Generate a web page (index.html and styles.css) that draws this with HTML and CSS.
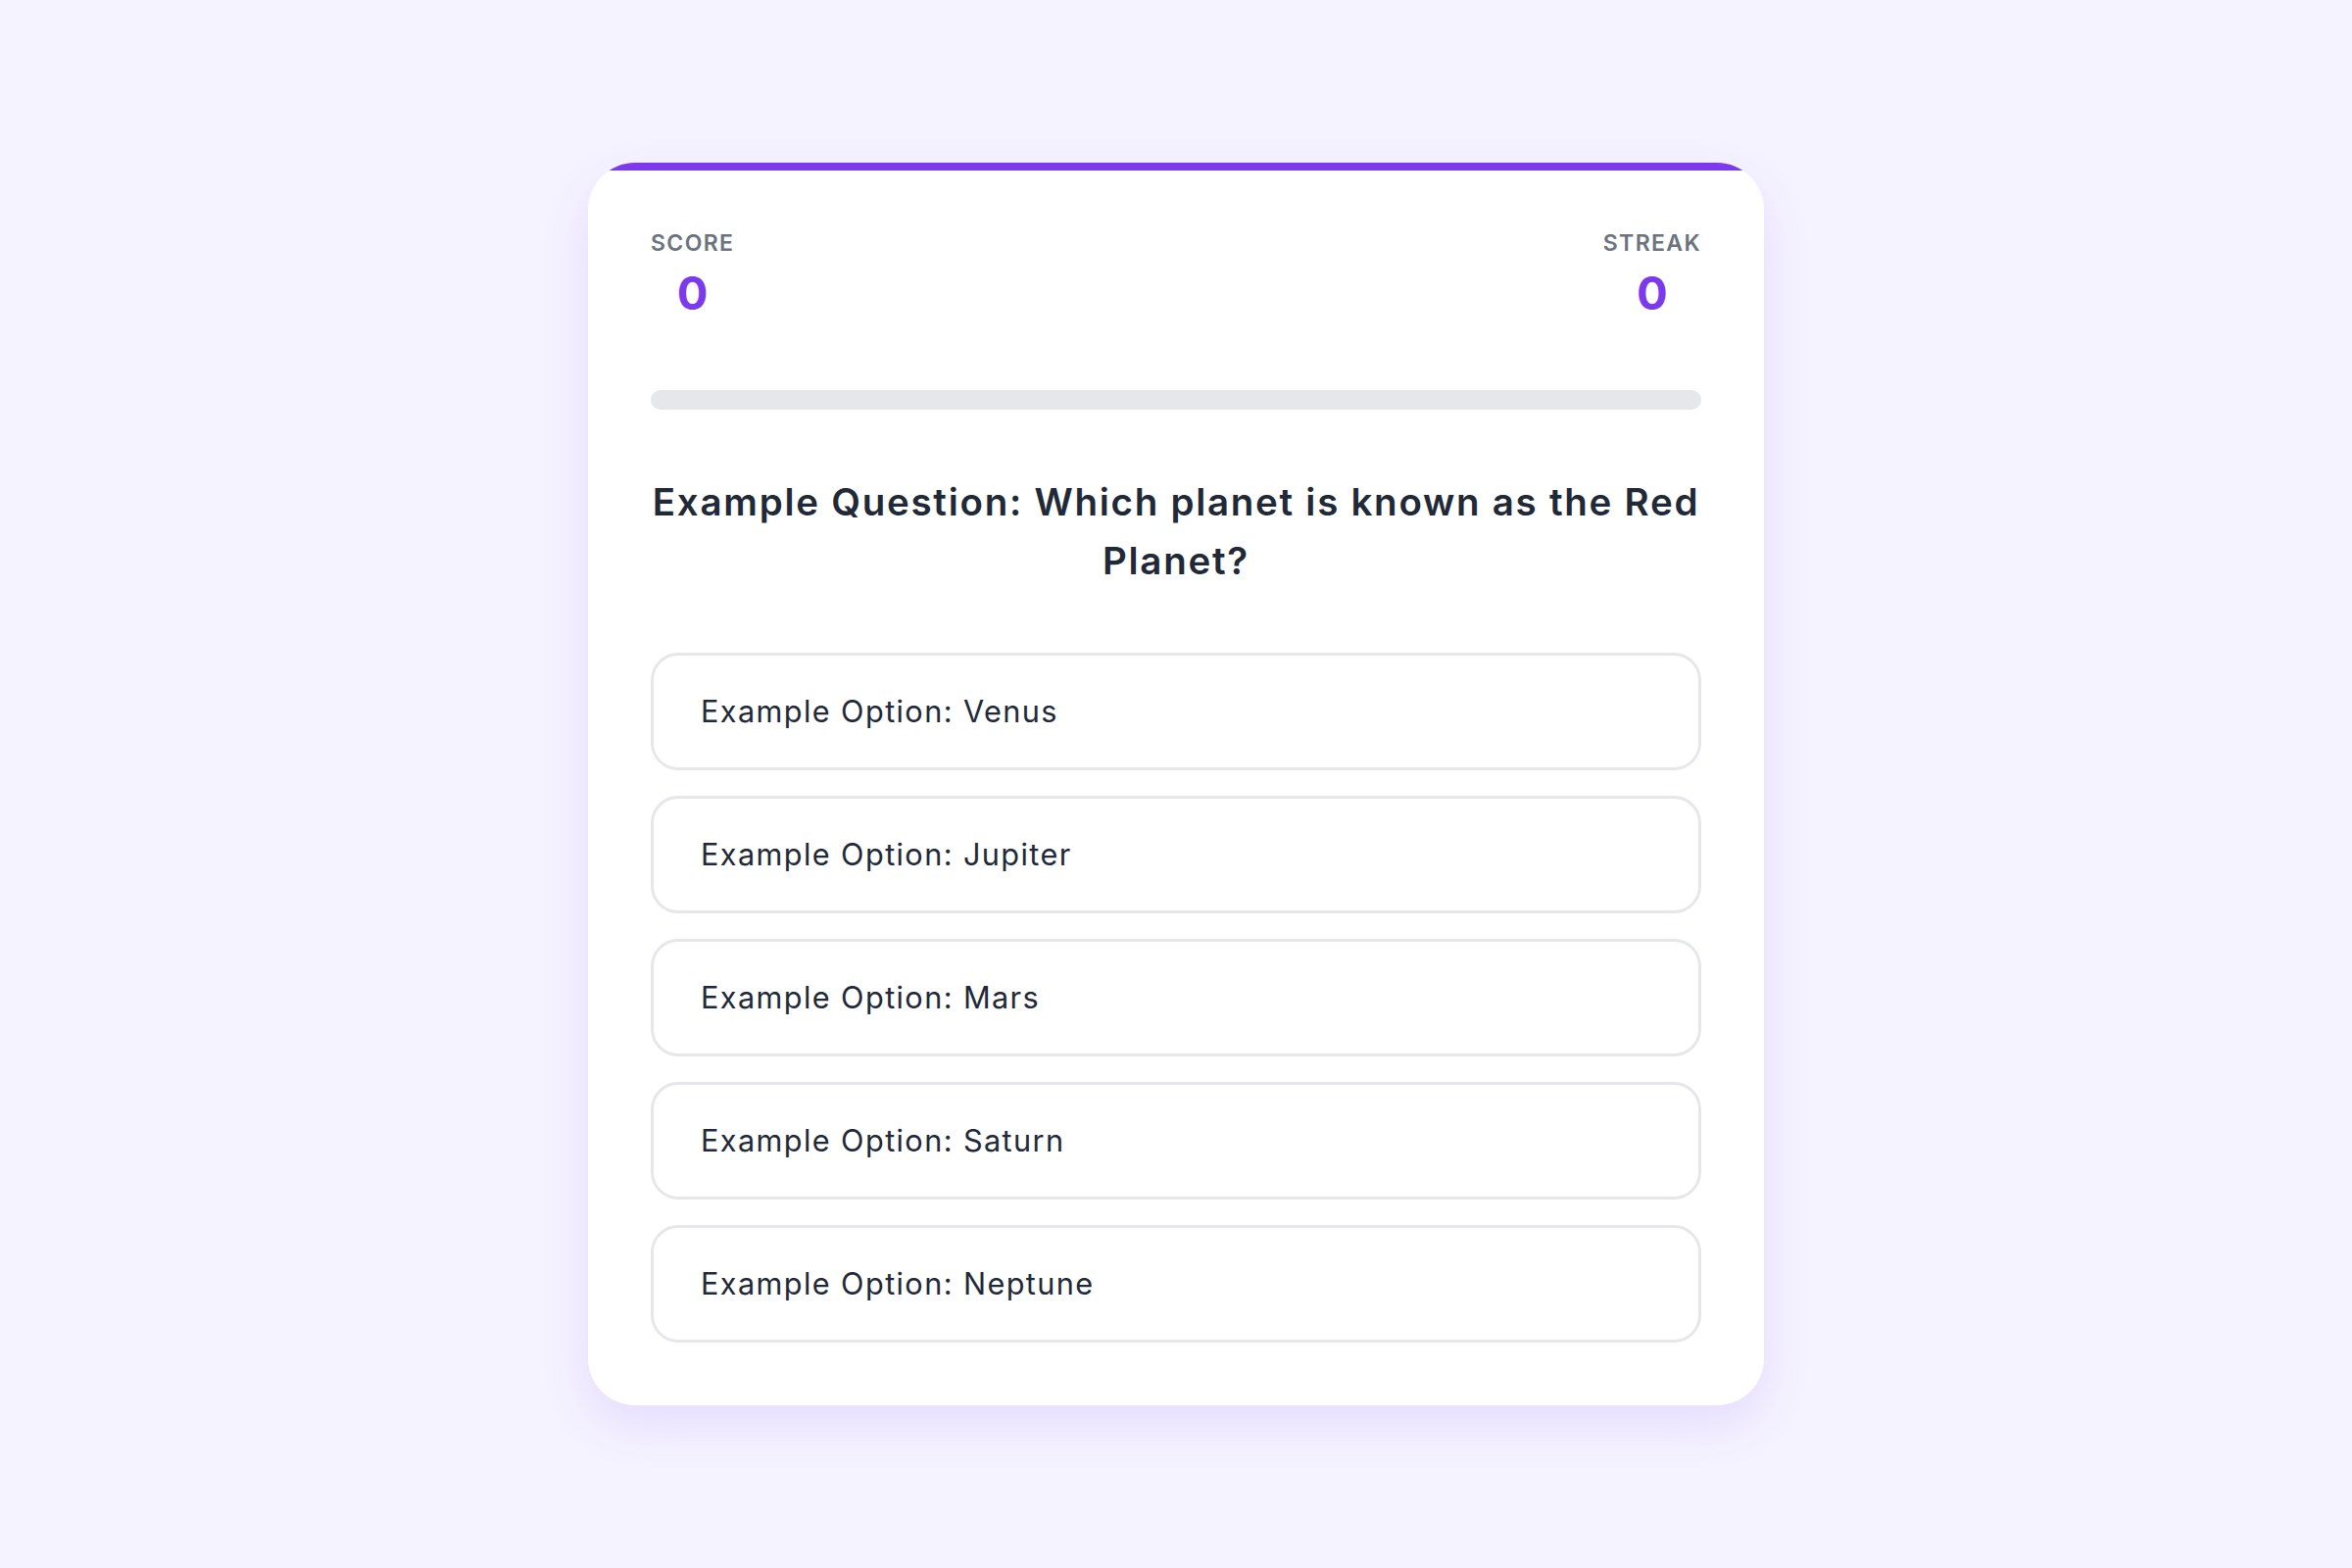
FILE: index.html
```html
<!DOCTYPE html>
<html lang="en">
<head>
<meta charset="utf-8">
<title>Quiz</title>
<link rel="stylesheet" href="styles.css">
</head>
<body>
  <main class="quiz-card">
    <div class="stats">
      <div class="stat">
        <div class="stat-label">Score</div>
        <div class="stat-value">0</div>
      </div>
      <div class="stat">
        <div class="stat-label">Streak</div>
        <div class="stat-value">0</div>
      </div>
    </div>
    <div class="progress"><div class="progress-fill" style="width:0%"></div></div>
    <h1 class="question">Example Question: Which planet is known as the Red Planet?</h1>
    <div class="options">
      <button class="option">Example Option: Venus</button>
      <button class="option">Example Option: Jupiter</button>
      <button class="option">Example Option: Mars</button>
      <button class="option">Example Option: Saturn</button>
      <button class="option">Example Option: Neptune</button>
    </div>
  </main>
</body>
</html>
```

FILE: styles.css
```css
* { box-sizing: border-box; }

html, body {
  margin: 0;
  padding: 0;
}

body {
  min-height: 100vh;
  background: #f5f3ff;
  font-family: "Inter", "Open Sans", sans-serif;
  color: #1f2937;
  display: flex;
  align-items: center;
  justify-content: center;
}

.quiz-card {
  position: relative;
  width: 1200px;
  background: #ffffff;
  border-radius: 48px;
  padding: 64px;
  overflow: hidden;
  box-shadow: 0 20px 50px rgba(124, 58, 237, 0.12);
}

.quiz-card::before {
  content: "";
  position: absolute;
  top: 0;
  left: 0;
  right: 0;
  height: 8px;
  background: #7c3aed;
}

.stats {
  display: flex;
  justify-content: space-between;
  align-items: flex-start;
}

.stat {
  text-align: center;
}

.stat-label {
  font-size: 23px;
  line-height: 36px;
  font-weight: 600;
  letter-spacing: 0.06em;
  text-transform: uppercase;
  color: #6b7280;
}

.stat-value {
  font-size: 47px;
  line-height: 66px;
  font-weight: 700;
  color: #7c3aed;
}

.progress {
  margin-top: 66px;
  height: 20px;
  border-radius: 10px;
  background: #e5e7eb;
  overflow: hidden;
}

.progress-fill {
  height: 100%;
  background: #7c3aed;
}

.question {
  margin: 64px 0 64px;
  font-size: 38.5px;
  line-height: 60px;
  font-weight: 600;
  letter-spacing: 0.045em;
  text-align: center;
  color: #1f2937;
}

.options {
  display: flex;
  flex-direction: column;
  gap: 26px;
}

.option {
  display: block;
  width: 100%;
  text-align: left;
  font-family: inherit;
  font-size: 30.7px;
  line-height: 48px;
  font-weight: 400;
  letter-spacing: 0.045em;
  color: #1f2937;
  background: #ffffff;
  border: 3px solid #e5e7eb;
  border-radius: 28px;
  padding: 33px 48px;
  cursor: pointer;
}
```
